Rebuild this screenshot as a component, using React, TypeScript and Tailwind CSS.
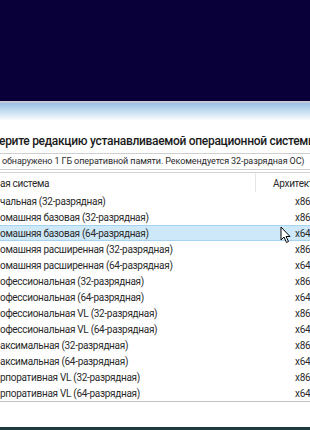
const rows: [string, string][] = [
  ["чальная (32-разрядная)", "x86"],
  ["омашняя базовая (32-разрядная)", "x86"],
  ["омашняя базовая (64-разрядная)", "x64"],
  ["омашняя расширенная (32-разрядная)", "x86"],
  ["омашняя расширенная (64-разрядная)", "x64"],
  ["офессиональная (32-разрядная)", "x86"],
  ["офессиональная (64-разрядная)", "x64"],
  ["офессиональная VL (32-разрядная)", "x86"],
  ["офессиональная VL (64-разрядная)", "x64"],
  ["аксимальная (32-разрядная)", "x86"],
  ["аксимальная (64-разрядная)", "x64"],
  ["рпоративная VL (32-разрядная)", "x86"],
  ["рпоративная VL (64-разрядная)", "x64"],
];

const SELECTED = 2;

const Cursor = () => (
  <svg
    className="absolute left-[280px] top-[226px]"
    width="12"
    height="18"
    viewBox="0 0 12 18"
  >
    <path
      d="M1 1 L1 14 L4 11 L6.5 16.5 L8.5 15.5 L6 10.5 L10 10.5 Z"
      fill="#fff"
      stroke="#000"
      strokeWidth="1"
      strokeLinejoin="round"
    />
  </svg>
);

export default function App() {
  return (
    <div className="relative w-[310px] h-[430px] overflow-hidden bg-white flex flex-col font-['Roboto',sans-serif] text-[#2a2a2a]">
      <div className="h-[101px] bg-[#09003a]" />
      <div className="h-[2px] bg-[#c6c8d6]" />
      <div className="h-[18px] bg-gradient-to-b from-[#98c0e4] to-white" />

      <div className="h-[31px] flex items-end">
        <div className="h-[21px] leading-[21px] text-[12px] font-medium tracking-[-0.3px] whitespace-nowrap text-[#1a1a1a] -ml-[1px]">
          ерите редакцию устанавливаемой операционной системы
        </div>
      </div>

      <div className="h-[17px] mt-[1px] border-y border-[#cfcfcf] flex items-center">
        <span className="text-[9px] tracking-[-0.1px] whitespace-nowrap pl-[2px]">
          обнаружено 1 ГБ оперативной памяти. Рекомендуется 32-разрядная ОС)
        </span>
      </div>

      <div className="mt-[2px] border-t border-[#d4d4d4]">
        <div className="h-[20px] flex items-center text-[10px] tracking-[-0.3px] relative">
          <span className="whitespace-nowrap">ая система</span>
          <div className="absolute left-[255px] top-0 h-[19px] w-px bg-[#e6e6e6]" />
          <span className="absolute left-[273px] whitespace-nowrap">Архитектура</span>
        </div>

        <div className="border-b border-[#c2c2c2]">
          {rows.map(([name, arch], i) => (
            <div
              key={i}
              className={
                i === SELECTED
                  ? "relative h-[16px] flex items-center text-[10px] tracking-[-0.3px] bg-[#cde8f8] border-y border-[#a5d3f1]"
                  : "relative h-[16px] flex items-center text-[10px] tracking-[-0.3px]"
              }
            >
              <span className="whitespace-nowrap">{name}</span>
              <span className="absolute left-[295px] whitespace-nowrap">{arch}</span>
            </div>
          ))}
        </div>
      </div>

      <div className="flex-1" />
      <div className="h-[3px] bg-[#1e3a3c]" />
      <Cursor />
    </div>
  );
}
